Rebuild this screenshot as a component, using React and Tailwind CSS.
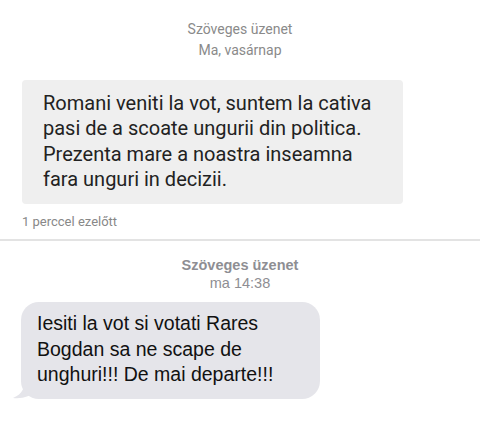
export default function App() {
  return (
    <div className="w-[480px] h-[430px] bg-white overflow-hidden">
      <section className="font-['Roboto',sans-serif]">
        <div className="pt-[19px] text-center text-[14px] leading-[21px] text-[#8a8a8a]">
          <p>Szöveges üzenet</p>
          <p>Ma, vasárnap</p>
        </div>
        <div className="mt-[19px] ml-[22px] w-[381px] h-[124px] rounded-[4px] bg-[#efefef] pl-[21px] pt-[11px]">
          <p className="text-[20px] leading-[25.3px] text-[#222]">
            Romani veniti la vot, suntem la cativa
            <br />
            pasi de a scoate ungurii din politica.
            <br />
            Prezenta mare a noastra inseamna
            <br />
            fara unguri in decizii.
          </p>
        </div>
        <p className="ml-[22px] mt-[8px] text-[13px] leading-[20px] text-[#888]">1 perccel ezelőtt</p>
      </section>
      <div className="mt-[7px] h-[2px] bg-[#e3e3e3]" />
      <section className="font-['Liberation_Sans',sans-serif]">
        <div className="pt-[15px] text-center text-[14.5px] leading-[18px] font-bold text-[#8e8e93]">
          <p>Szöveges üzenet</p>
          <p className="font-normal">ma 14:38</p>
        </div>
        <div className="relative mt-[10px] ml-[21px] w-[299px] h-[97px]">
          <svg className="absolute left-[-8px] bottom-0" width="30" height="22" viewBox="0 0 30 22">
            <path d="M12 0 C12 10 10 17 0 21 C10 22 18 19 22 14 L22 0 Z" fill="#e5e5ea" />
          </svg>
          <div className="relative h-full rounded-[18px] bg-[#e5e5ea] pl-[16px] pt-[9px]">
            <p className="text-[19.5px] leading-[25.5px] text-[#111]">
              Iesiti la vot si votati Rares
              <br />
              Bogdan sa ne scape de
              <br />
              unghuri!!! De mai departe!!!
            </p>
          </div>
        </div>
      </section>
    </div>
  )
}
